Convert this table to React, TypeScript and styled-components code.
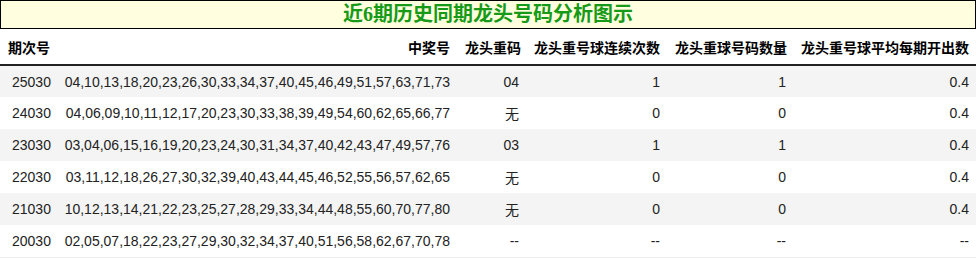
import { createGlobalStyle, styled } from 'styled-components';

type Row = {
  period: string;
  numbers: string;
  repeat: string;
  streak: string;
  count: string;
  average: string;
};

const rows: Row[] = [
  { period: '25030', numbers: '04,10,13,18,20,23,26,30,33,34,37,40,45,46,49,51,57,63,71,73', repeat: '04', streak: '1', count: '1', average: '0.4' },
  { period: '24030', numbers: '04,06,09,10,11,12,17,20,23,30,33,38,39,49,54,60,62,65,66,77', repeat: '无', streak: '0', count: '0', average: '0.4' },
  { period: '23030', numbers: '03,04,06,15,16,19,20,23,24,30,31,34,37,40,42,43,47,49,57,76', repeat: '03', streak: '1', count: '1', average: '0.4' },
  { period: '22030', numbers: '03,11,12,18,26,27,30,32,39,40,43,44,45,46,52,55,56,57,62,65', repeat: '无', streak: '0', count: '0', average: '0.4' },
  { period: '21030', numbers: '10,12,13,14,21,22,23,25,27,28,29,33,34,44,48,55,60,70,77,80', repeat: '无', streak: '0', count: '0', average: '0.4' },
  { period: '20030', numbers: '02,05,07,18,22,23,27,29,30,32,34,37,40,51,56,58,62,67,70,78', repeat: '--', streak: '--', count: '--', average: '--' },
];

// column widths in px, they add up to the 976px panel
const columnWidths = [57, 400, 69, 141, 126, 183];

const GlobalStyle = createGlobalStyle`
  body {
    margin: 0;
    background: #ffffff;
    font-family: "Liberation Sans", "Noto Sans CJK SC", sans-serif;
  }
`;

const StyledPanel = styled.section`
  width: 976px;
`;

const StyledTitle = styled.h2`
  box-sizing: border-box;
  height: 29px;
  margin: 0;
  border: 1px solid #000000;
  background: #ffffe0;
  color: #179a17;
  font-family: "Liberation Serif", "Noto Sans CJK SC", serif;
  font-size: 20px;
  font-weight: bold;
  line-height: 27px;
  text-align: center;
`;

const StyledTable = styled.table`
  width: 100%;
  table-layout: fixed;
  border-collapse: collapse;
  font-size: 14px;
  color: #222222;
`;

const StyledCol = styled.col<{ $width: number }>`
  width: ${({ $width }) => $width}px;
`;

const StyledHead = styled.th<{ $align?: 'left' | 'right' }>`
  height: 35px;
  padding: 0 7px 0 8px;
  border-bottom: 2px solid #222222;
  color: #000000;
  font-family: "Noto Sans CJK SC", sans-serif;
  font-weight: bold;
  white-space: nowrap;
  text-align: ${({ $align }) => $align ?? 'right'};
`;

const StyledRow = styled.tr<{ $striped: boolean }>`
  height: 32px;
  background: ${({ $striped }) => ($striped ? '#f4f4f4' : '#ffffff')};

  &:last-child {
    border-bottom: 1px solid #eeeeee;
  }
`;

const StyledCell = styled.td<{ $first?: boolean }>`
  padding: ${({ $first }) => ($first ? '0 0 0 12px' : '0 7px 0 0')};
  white-space: nowrap;
  text-align: ${({ $first }) => ($first ? 'left' : 'right')};
`;

export default function App() {
  return (
    <>
      <GlobalStyle />
      <StyledPanel>
        <StyledTitle>近6期历史同期龙头号码分析图示</StyledTitle>
        <StyledTable>
          <colgroup>
            {columnWidths.map((width, index) => (
              <StyledCol key={index} $width={width} />
            ))}
          </colgroup>
          <thead>
            <tr>
              <StyledHead $align="left">期次号</StyledHead>
              <StyledHead>中奖号</StyledHead>
              <StyledHead>龙头重码</StyledHead>
              <StyledHead>龙头重号球连续次数</StyledHead>
              <StyledHead>龙头重球号码数量</StyledHead>
              <StyledHead>龙头重号球平均每期开出数</StyledHead>
            </tr>
          </thead>
          <tbody>
            {rows.map((row, index) => (
              <StyledRow key={row.period} $striped={index % 2 === 0}>
                <StyledCell $first>{row.period}</StyledCell>
                <StyledCell>{row.numbers}</StyledCell>
                <StyledCell>{row.repeat}</StyledCell>
                <StyledCell>{row.streak}</StyledCell>
                <StyledCell>{row.count}</StyledCell>
                <StyledCell>{row.average}</StyledCell>
              </StyledRow>
            ))}
          </tbody>
        </StyledTable>
      </StyledPanel>
    </>
  );
}
